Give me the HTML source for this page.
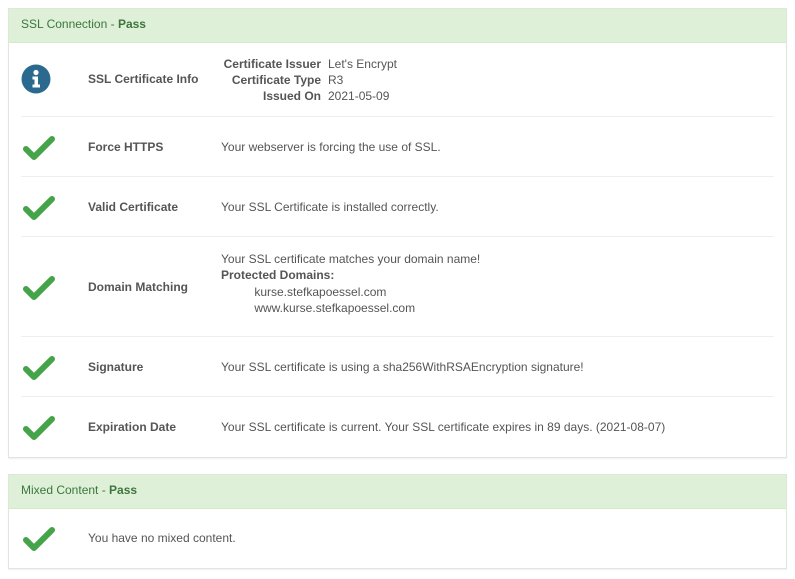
<!DOCTYPE html>
<html><head><meta charset="utf-8"><style>
*{margin:0;padding:0;box-sizing:border-box}
body{width:795px;height:579px;background:#fff;font-family:"Liberation Sans",sans-serif;font-size:12px;color:#555;position:relative;overflow:hidden}
.panel{position:absolute;left:8px;width:779px;border:1px solid #dfe6dc;background:#fff;box-shadow:0 1px 1px rgba(0,0,0,.06)}
.hd{height:34px;background:#dff0d8;color:#3c763d;padding-left:12px;line-height:31px;font-size:12px;border-bottom:1px solid #d6e9c6}
.hd b{font-weight:bold}
.a{position:absolute;white-space:nowrap}
.lbl{left:79px;font-weight:bold;color:#555}
.desc{left:212px}
.hr{position:absolute;left:12px;width:753px;height:1px;background:#eee}
.ic{position:absolute;left:14px}
</style></head><body>
<div class="panel" style="top:8px;height:450px">
<div class="hd">SSL Connection - <b>Pass</b></div>
<svg class="ic" style="top:55px;left:12px" width="30" height="30" viewBox="0 0 30 30"><circle cx="15" cy="15" r="14.5" fill="#2b6a8e"/><circle cx="15" cy="8.5" r="2.6" fill="#fff"/><path d="M11.5 12.5h5.5v8h2v3h-7.5v-3h2v-5h-2z" fill="#fff"/></svg>
<div class="a lbl" style="top:63px">SSL Certificate Info</div>
<div class="a" style="left:190px;width:122px;text-align:right;top:47px;line-height:16px;font-weight:bold">Certificate Issuer<br>Certificate Type<br>Issued On</div>
<div class="a" style="left:319px;top:47px;line-height:16px">Let's Encrypt<br>R3<br>2021-05-09</div>
<div class="hr" style="top:107px"></div>

<svg class="ic" style="top:127px" width="32" height="24" viewBox="0 0 32 24"><path d="M3 13l8 8L29 3" fill="none" stroke="#45a349" stroke-width="6" stroke-linecap="round" stroke-linejoin="round"/></svg>
<div class="a lbl" style="top:131px">Force HTTPS</div>
<div class="a desc" style="top:131px">Your webserver is forcing the use of SSL.</div>
<div class="hr" style="top:167px"></div>

<svg class="ic" style="top:187px" width="32" height="24" viewBox="0 0 32 24"><path d="M3 13l8 8L29 3" fill="none" stroke="#45a349" stroke-width="6" stroke-linecap="round" stroke-linejoin="round"/></svg>
<div class="a lbl" style="top:191px">Valid Certificate</div>
<div class="a desc" style="top:191px">Your SSL Certificate is installed correctly.</div>
<div class="hr" style="top:227px"></div>

<svg class="ic" style="top:267px" width="32" height="24" viewBox="0 0 32 24"><path d="M3 13l8 8L29 3" fill="none" stroke="#45a349" stroke-width="6" stroke-linecap="round" stroke-linejoin="round"/></svg>
<div class="a lbl" style="top:271px">Domain Matching</div>
<div class="a desc" style="top:242px;line-height:16.3px">Your SSL certificate matches your domain name!<br><b>Protected Domains:</b><br>&nbsp;&nbsp;&nbsp;&nbsp;&nbsp;&nbsp;&nbsp;&nbsp;&nbsp;&nbsp;kurse.stefkapoessel.com<br>&nbsp;&nbsp;&nbsp;&nbsp;&nbsp;&nbsp;&nbsp;&nbsp;&nbsp;&nbsp;www.kurse.stefkapoessel.com</div>
<div class="hr" style="top:327px"></div>

<svg class="ic" style="top:347px" width="32" height="24" viewBox="0 0 32 24"><path d="M3 13l8 8L29 3" fill="none" stroke="#45a349" stroke-width="6" stroke-linecap="round" stroke-linejoin="round"/></svg>
<div class="a lbl" style="top:351px">Signature</div>
<div class="a desc" style="top:351px">Your SSL certificate is using a sha256WithRSAEncryption signature!</div>
<div class="hr" style="top:387px"></div>

<svg class="ic" style="top:407px" width="32" height="24" viewBox="0 0 32 24"><path d="M3 13l8 8L29 3" fill="none" stroke="#45a349" stroke-width="6" stroke-linecap="round" stroke-linejoin="round"/></svg>
<div class="a lbl" style="top:411px">Expiration Date</div>
<div class="a desc" style="top:411px">Your SSL certificate is current. Your SSL certificate expires in 89 days. (2021-08-07)</div>
</div>

<div class="panel" style="top:474px;height:95px">
<div class="hd">Mixed Content - <b>Pass</b></div>
<svg class="ic" style="top:52px" width="32" height="24" viewBox="0 0 32 24"><path d="M3 13l8 8L29 3" fill="none" stroke="#45a349" stroke-width="6" stroke-linecap="round" stroke-linejoin="round"/></svg>
<div class="a lbl" style="top:56px;font-weight:normal">You have no mixed content.</div>
</div>
</body></html>
